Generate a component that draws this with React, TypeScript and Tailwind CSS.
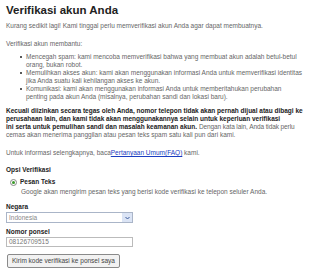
import React from 'react'

const bullets = [
  'Mencegah spam: kami mencoba memverifikasi bahwa yang membuat akun adalah betul-betul orang, bukan robot.',
  'Memulihkan akses akun: kami akan menggunakan informasi Anda untuk memverifikasi identitas jika Anda suatu kali kehilangan akses ke akun.',
  'Komunikasi: kami akan menggunakan informasi Anda untuk memberitahukan perubahan penting pada akun Anda (misalnya, perubahan sandi dan lokasi baru).',
]

export default function App() {
  return (
    <div className="w-[320px] h-[278px] overflow-hidden bg-white px-[6px] pt-[3px] font-['Liberation_Sans',Arial,sans-serif] text-[6.5px] leading-[8px] text-[#666]">
      <h1 className="text-[11.5px] leading-[14px] font-bold text-[#222]">Verifikasi akun Anda</h1>
      <p className="mt-[5px]">Kurang sedikit lagi! Kami tinggal perlu memverifikasi akun Anda agar dapat membuatnya.</p>
      <p className="mt-[10px]">Verifikasi akun membantu:</p>
      <ul className="mt-[5px] pl-[20px] pr-[10px]">
        {bullets.map((b) => (
          <li key={b} className="relative">
            <span className="absolute left-[-6px] top-[3px] w-[2px] h-[2px] rounded-full bg-[#222]" />
            {b}
          </li>
        ))}
      </ul>
      <p className="mt-[6px] -mr-[4px]">
        <span className="font-bold text-[#222]">
          Kecuali diizinkan secara tegas oleh Anda, nomor telepon tidak akan pernah dijual atau dibagi ke perusahaan lain, dan kami tidak akan menggunakannya selain untuk keperluan verifikasi
          <br />
          ini serta untuk pemulihan sandi dan masalah keamanan akun.
        </span>{' '}
        <span className="tracking-[-0.1px]">Dengan kata lain, Anda tidak perlu</span>
        <br />
        cemas akan menerima panggilan atau pesan teks spam satu kali pun dari kami.
      </p>
      <p className="mt-[10px]">
        Untuk informasi selengkapnya, baca<a className="text-[#1a3dc1] underline">Pertanyaan Umum(FAQ)</a> kami.
      </p>
      <div className="mt-[9px] font-bold text-[#222]">Opsi Verifikasi</div>
      <div className="mt-[4px] pl-[4px] flex items-center gap-[3px]">
        <span className="w-[7px] h-[7px] rounded-full border border-[#888] flex items-center justify-center">
          <span className="w-[3px] h-[3px] rounded-full bg-[#3a9a2a]" />
        </span>
        <span className="font-bold text-[#222]">Pesan Teks</span>
      </div>
      <p className="pl-[15px] mt-[2px]">Google akan mengirim pesan teks yang berisi kode verifikasi ke telepon seluler Anda.</p>
      <div className="mt-[7px] font-bold text-[#222]">Negara</div>
      <div className="mt-[1px] w-[127px] h-[11px] border border-[#aab5c8] flex items-center justify-between">
        <span className="pl-[2px] text-[#888]">Indonesia</span>
        <span className="w-[10px] h-[9px] bg-[#dbe4f5] flex items-center justify-center">
          <svg width="5" height="4" viewBox="0 0 5 4"><path d="M0.5 1 L2.5 3 L4.5 1" fill="none" stroke="#3b5a9b" strokeWidth="1" /></svg>
        </span>
      </div>
      <div className="mt-[5px] font-bold text-[#222]">Nomor ponsel</div>
      <div className="mt-[1px] w-[127px] h-[10px] border border-[#bbb] pl-[2px] leading-[8px] text-[#777]">08126709515</div>
      <button className="mt-[7px] ml-[1px] h-[14px] px-[4px] border border-[#8a8a8a] rounded-[2px] bg-[#f2f2f2] text-[6.5px] text-[#444] leading-[12px]">
        Kirim kode verifikasi ke ponsel saya
      </button>
    </div>
  )
}
